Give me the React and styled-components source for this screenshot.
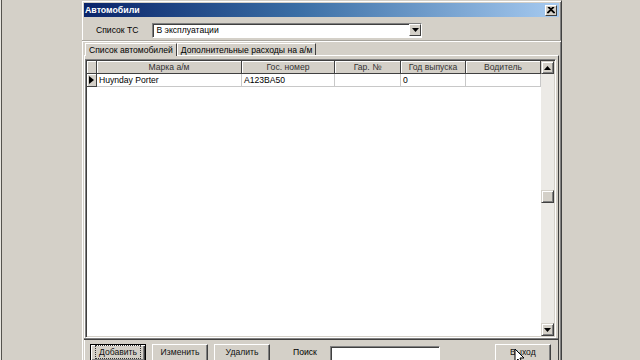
import React from "react";
import styled, { createGlobalStyle } from "styled-components";

const Global = createGlobalStyle`
  html, body { margin: 0; padding: 0; background: #d4d0c8; overflow: hidden; }
  * { box-sizing: border-box; }
`;

const Page = styled.div`
  width: 640px;
  height: 360px;
  display: flex;
  align-items: flex-start;
  background: #d4d0c8;
  border-left: 1px solid #e8e6e0;
  padding-left: 80px;
  padding-top: 0;
  overflow: hidden;
  font-family: "Liberation Sans", Arial, sans-serif;
  font-size: 8.6px;
  color: #000;
  position: relative;
  &::before {
    content: "";
    position: absolute;
    left: 0;
    top: 0;
    bottom: 0;
    width: 1px;
    background: #55534e;
  }
`;

const Window = styled.div`
  width: 481px;
  height: 380px;
  display: flex;
  flex-direction: column;
  background: #d4d0c8;
  border: 1px solid;
  border-color: #d4d0c8 #404040 #404040 #d4d0c8;
  box-shadow: inset 1px 1px 0 #fff, inset -1px -1px 0 #808080;
  padding: 1px 2px 2px 2px;
`;

const TitleBar = styled.div`
  height: 14px;
  flex-shrink: 0;
  display: flex;
  align-items: center;
  justify-content: space-between;
  background: linear-gradient(to right, #0a246a, #3a6ea5 45%, #a6caf0);
  padding: 0 2px 0 1px;
  margin-top: 1px;
`;

const Title = styled.span`
  color: #fff;
  font-weight: bold;
  font-size: 8.8px;
`;

const CloseBtn = styled.div`
  width: 12px;
  height: 11px;
  background: #d4d0c8;
  border: 1px solid;
  border-color: #fff #404040 #404040 #fff;
  display: flex;
  align-items: center;
  justify-content: center;
`;

const TopRow = styled.div`
  display: flex;
  align-items: center;
  height: 16px;
  flex-shrink: 0;
  margin-top: 5px;
  padding-left: 12px;
  gap: 14px;
`;

const Label = styled.span`
  font-size: 8.6px;
`;

const Combo = styled.div`
  width: 270px;
  height: 15px;
  background: #fff;
  border: 1px solid;
  border-color: #808080 #fff #fff #808080;
  box-shadow: inset 1px 1px 0 #404040;
  display: flex;
  align-items: center;
  justify-content: space-between;
  padding-left: 3px;
`;

const DropBtn = styled.div`
  width: 12px;
  height: 12px;
  background: #d4d0c8;
  border: 1px solid;
  border-color: #fff #404040 #404040 #fff;
  display: flex;
  align-items: center;
  justify-content: center;
`;

const Separator = styled.div`
  height: 2px;
  flex-shrink: 0;
  margin-top: 2px;
  border-top: 1px solid #a8a59e;
  border-bottom: 1px solid #fff;
  margin-left: -2px;
  margin-right: -2px;
`;

const Tabs = styled.div`
  display: flex;
  align-items: flex-end;
  height: 13px;
  flex-shrink: 0;
  padding-left: 1px;
`;

const Tab = styled.div`
  height: ${(p) => (p.$active ? 13 : 12)}px;
  padding: 0 3px;
  display: flex;
  align-items: center;
  border-top: 1px solid #fff;
  border-left: 1px solid #fff;
  border-right: 1px solid #404040;
  background: #d4d0c8;
  margin-bottom: ${(p) => (p.$active ? -1 : 0)}px;
  position: relative;
  z-index: ${(p) => (p.$active ? 2 : 1)};
  font-size: 8.6px;
`;

const Panel = styled.div`
  flex: 1;
  display: flex;
  flex-direction: column;
  border-top: 1px solid #fff;
  border-left: 1px solid #fff;
  border-right: 1px solid #404040;
  padding: 3px 2px 0 0;
`;

const Grid = styled.div`
  height: 279px;
  flex-shrink: 0;
  display: flex;
  border: 1px solid;
  border-color: #808080 #fff #fff #808080;
  box-shadow: inset 1px 1px 0 #404040, inset -1px -1px 0 #d4d0c8;
  background: #fff;
  padding: 1px;
`;

const GridBody = styled.div`
  flex: 1;
  display: flex;
  flex-direction: column;
`;

const Row = styled.div`
  display: grid;
  grid-template-columns: 10px 145px 93px 66px 65px 75px;
  height: 13px;
`;

const HeadCell = styled.div`
  background: #d4d0c8;
  border-right: 1px solid #404040;
  border-bottom: 1px solid #404040;
  box-shadow: inset 1px 1px 0 #fff;
  display: flex;
  align-items: center;
  justify-content: center;
  font-size: 8.6px;
  color: #333;
`;

const Cell = styled.div`
  border-right: 1px solid #c8c8c8;
  border-bottom: 1px solid #c8c8c8;
  display: flex;
  align-items: center;
  padding-left: 2px;
  font-size: 8.6px;
  white-space: nowrap;
  overflow: hidden;
`;

const Indicator = styled.div`
  background: #d4d0c8;
  border-right: 1px solid #404040;
  border-bottom: 1px solid #404040;
  box-shadow: inset 1px 1px 0 #fff;
  display: flex;
  align-items: center;
  justify-content: center;
`;

const VScroll = styled.div`
  width: 13px;
  display: flex;
  flex-direction: column;
  background: #eceae6;
`;

const ScrollBtn = styled.div`
  width: 13px;
  height: 13px;
  background: #d4d0c8;
  border: 1px solid;
  border-color: #d4d0c8 #404040 #404040 #d4d0c8;
  box-shadow: inset 1px 1px 0 #fff, inset -1px -1px 0 #808080;
  display: flex;
  align-items: center;
  justify-content: center;
`;

const Track = styled.div`
  flex: 1;
  display: flex;
  flex-direction: column;
  padding-top: ${(p) => p.$offset}px;
`;

const Thumb = styled.div`
  width: 13px;
  height: 13px;
  background: #d4d0c8;
  border: 1px solid;
  border-color: #d4d0c8 #404040 #404040 #d4d0c8;
  box-shadow: inset 1px 1px 0 #fff, inset -1px -1px 0 #808080;
`;

const PanelBottom = styled.div`
  height: 2px;
  flex-shrink: 0;
  margin: 0 -2px 0 -1px;
  border-bottom: 1px solid #404040;
  border-top: 1px solid #808080;
`;

const Buttons = styled.div`
  display: flex;
  align-items: center;
  padding-left: 5px;
  margin-top: 4px;
  gap: 6px;
`;

const Button = styled.div`
  width: ${(p) => p.$w || 56}px;
  height: 18px;
  flex-shrink: 0;
  background: #d4d0c8;
  border: 1px solid;
  border-color: ${(p) => (p.$focus ? "#000" : "#fff #404040 #404040 #fff")};
  box-shadow: ${(p) =>
    p.$focus
      ? "inset 1px 1px 0 #fff, inset -1px -1px 0 #404040, inset -2px -2px 0 #808080"
      : "inset -1px -1px 0 #808080"};
  display: flex;
  align-items: center;
  justify-content: center;
  padding-bottom: 2px;
  font-size: 8.6px;
  color: #111;
  position: relative;
  margin-left: ${(p) => p.$ml || 0}px;
`;

const FocusText = styled.span`
  outline: 1px dotted #333;
  outline-offset: 1px;
  padding: 0 2px;
`;

const SearchLabel = styled.span`
  margin-left: 17px;
  font-size: 8.6px;
  padding-bottom: 2px;
`;

const SearchInput = styled.div`
  width: 110px;
  height: 15px;
  margin-left: 7px;
  background: #fff;
  border: 1px solid;
  border-color: #808080 #fff #fff #808080;
  box-shadow: inset 1px 1px 0 #404040;
`;

const Cursor = styled.svg`
  position: absolute;
  left: 18px;
  top: 3px;
`;

const cols = ["Марка а/м", "Гос. номер", "Гар. №", "Год выпуска", "Водитель"];
const row = ["Huynday Porter", "A123BA50", "", "0", ""];

export default function App() {
  return (
    <>
      <Global />
      <Page>
        <Window>
          <TitleBar>
            <Title>Автомобили</Title>
            <CloseBtn>
              <svg width="8" height="7" viewBox="0 0 8 7">
                <path d="M1 0 L7 6 M7 0 L1 6 M2 0 L8 6 M6 0 L0 6" stroke="#000" strokeWidth="1.1" />
              </svg>
            </CloseBtn>
          </TitleBar>
          <TopRow>
            <Label>Список ТС</Label>
            <Combo>
              <span>В эксплуатации</span>
              <DropBtn>
                <svg width="7" height="4" viewBox="0 0 7 4">
                  <path d="M0 0 H7 L3.5 4 Z" fill="#000" />
                </svg>
              </DropBtn>
            </Combo>
          </TopRow>
          <Separator />
          <Tabs>
            <Tab $active>Список автомобилей</Tab>
            <Tab>Дополнительные расходы на а/м</Tab>
          </Tabs>
          <Panel>
            <Grid>
              <GridBody>
                <Row>
                  <Indicator />
                  {cols.map((c) => (
                    <HeadCell key={c}>{c}</HeadCell>
                  ))}
                </Row>
                <Row>
                  <Indicator>
                    <svg width="5" height="8" viewBox="0 0 5 8">
                      <path d="M0 0 L5 4 L0 8 Z" fill="#000" />
                    </svg>
                  </Indicator>
                  {row.map((v, i) => (
                    <Cell key={i}>{v}</Cell>
                  ))}
                </Row>
              </GridBody>
              <VScroll>
                <ScrollBtn>
                  <svg width="7" height="4" viewBox="0 0 7 4">
                    <path d="M3.5 0 L7 4 H0 Z" fill="#000" />
                  </svg>
                </ScrollBtn>
                <Track $offset={116}>
                  <Thumb />
                </Track>
                <ScrollBtn>
                  <svg width="7" height="4" viewBox="0 0 7 4">
                    <path d="M0 0 H7 L3.5 4 Z" fill="#000" />
                  </svg>
                </ScrollBtn>
              </VScroll>
            </Grid>
            <PanelBottom />
            <Buttons>
              <Button $focus>
                <FocusText>Добавить</FocusText>
              </Button>
              <Button>Изменить</Button>
              <Button>Удалить</Button>
              <SearchLabel>Поиск</SearchLabel>
              <SearchInput />
              <Button $ml={49}>
                Выход
                <Cursor width="12" height="18" viewBox="0 0 12 18">
                  <path d="M1 1 L1 14 L4 11 L6.5 16.5 L8.5 15.5 L6 10 L10 10 Z" fill="#fff" stroke="#000" strokeWidth="1" />
                </Cursor>
              </Button>
            </Buttons>
          </Panel>
        </Window>
      </Page>
    </>
  );
}
